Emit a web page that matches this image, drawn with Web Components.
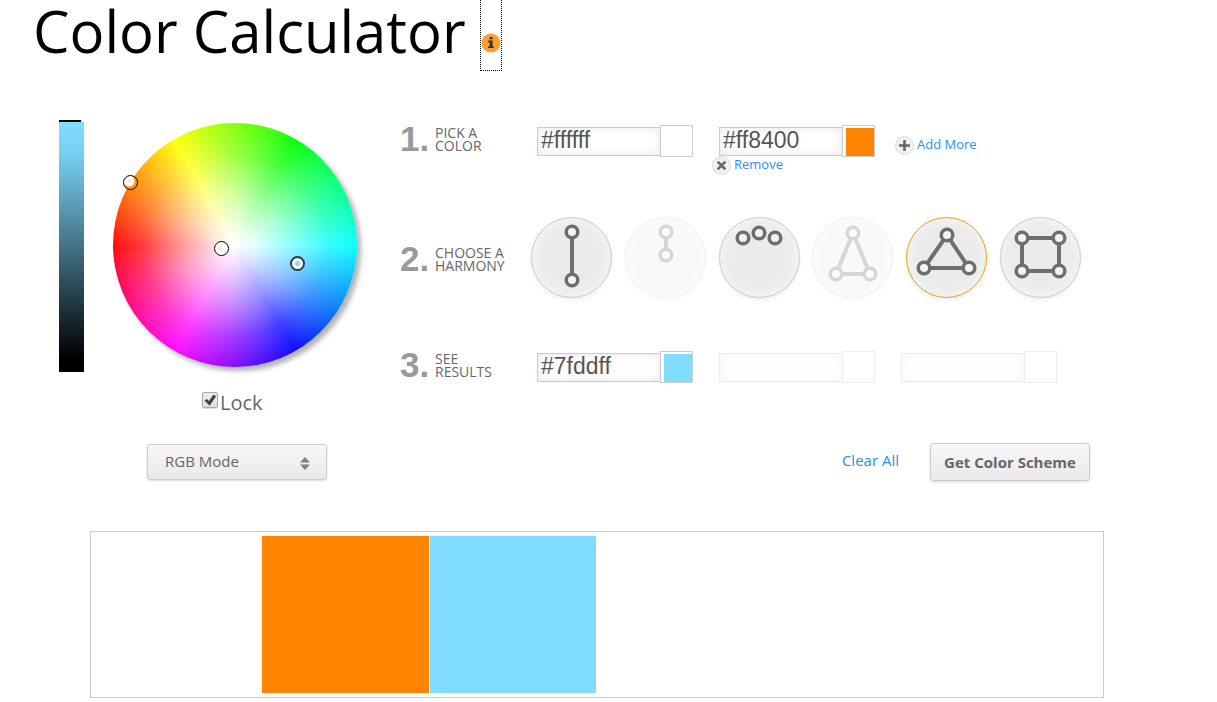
<!DOCTYPE html>
<html lang="en">
<head>
<meta charset="utf-8">
<title>Color Calculator</title>
<style>
  body { margin: 0; background: #fff; color: #666; font-family: "Open Sans", "Noto Sans", sans-serif; }
</style>
</head>
<body>
<color-calculator></color-calculator>

<script>
const define = (name, html, setup) => {
  const template = document.createElement('template');
  template.innerHTML = html;
  customElements.define(name, class extends HTMLElement {
    constructor() {
      super();
      this.attachShadow({ mode: 'open' }).append(template.content.cloneNode(true));
    }
    connectedCallback() { if (setup) setup(this, this.shadowRoot); }
  });
};

define('page-title', `
  <style>
    :host { display: block; padding-left: 33px; }
    h1 { margin: 0; font-size: 58px; line-height: 62px; font-weight: 400; color: #000; }
    a { outline: 1px dotted #000; }
    svg { width: 20px; height: 20px; }
  </style>
  <h1><slot></slot> <a href="#" aria-label="About the color calculator"><svg viewBox="0 0 20 20">
    <circle cx="10" cy="10" r="9.5" fill="#f9a030"/>
    <path d="M8.6 4h3v2.3h-3zM7.2 7.6h4.4v5.8h1.3V15H7v-1.6h1.6V9.2H7.2z" fill="#333"/>
  </svg></a></h1>
`);

define('brightness-slider', `
  <style>
    :host { display: block; }
    input {
      appearance: none; display: block; box-sizing: border-box; margin: 0;
      width: 25px; height: 252px; writing-mode: vertical-lr; direction: rtl;
      background: linear-gradient(#7fddff, #78d0f1 12%, #66aecd 26%, #000 95%) 0 2px / 100% 250px no-repeat;
    }
    input::-webkit-slider-thumb { appearance: none; width: 22px; height: 2px; margin-left: -3px; background: #000; }
  </style>
  <input type="range" min="0" max="100" value="100" aria-label="Brightness">
`);

define('wheel-handle', `
  <style>
    :host { position: absolute; box-sizing: border-box; width: 15px; height: 15px; border: 1px solid #000; border-radius: 50%; }
    :host([active]) { border: 2px solid #24404c; background: radial-gradient(circle, #7fddff 2px, #fff 3px); }
    :host([center]) { background: radial-gradient(circle at 5px 6px, #ffe6ea 2px, #fff 3px); }
    :host([edge]) { background: radial-gradient(circle at 5px 5px, #ffe3c4 1px, #fff 2px, #fff 5px, #ff9a10 6px); }
  </style>
`);

define('color-wheel', `
  <style>
    :host {
      display: block; position: relative; width: 244px; height: 244px; border-radius: 50%;
      background:
        radial-gradient(circle closest-side, #fff 0%, rgba(255,255,255,.88) 16%, rgba(255,255,255,.58) 45%, rgba(255,255,255,.24) 75%, rgba(255,255,255,.05) 100%),
        conic-gradient(from 270deg, #f00, #ff0, #0f0, #0ff, #00f, #f0f, #f00);
      box-shadow: 4px 4px 5px rgba(0,0,0,.3);
    }
  </style>
  <wheel-handle edge style="left:10px;top:52px"></wheel-handle>
  <wheel-handle center style="left:101px;top:118px"></wheel-handle>
  <wheel-handle active style="left:177px;top:133px"></wheel-handle>
`);

define('lock-box', `
  <style>
    :host { display: block; }
    label { display: flex; gap: 2px; font-size: 20px; line-height: 26px; }
    input {
      appearance: none; box-sizing: border-box; width: 16px; height: 16px; margin: 2px 0 0;
      border: 1px solid #aaa; border-radius: 2px; background: linear-gradient(#eee, #ddd);
      box-shadow: 0 1px 1px #ddd;
    }
    input:checked::before {
      content: ""; display: block; width: 14px; height: 14px; background: #444;
      clip-path: polygon(11% 54%, 27% 43%, 42% 57%, 75% 10%, 94% 23%, 47% 91%);
    }
  </style>
  <label><input type="checkbox" checked><slot></slot></label>
`);

define('mode-select', `
  <style>
    :host { display: grid; width: 180px; }
    select, svg { grid-area: 1 / 1; }
    select {
      appearance: none; box-sizing: border-box; height: 36px; padding: 0 17px 2px; border: 1px solid #ccc; border-radius: 3px;
      background: linear-gradient(#f8f8f8, #e9e9e9); box-shadow: 0 1px 2px #ddd;
      color: #666; font: 15px "Open Sans", "Noto Sans", sans-serif;
    }
    svg { justify-self: end; align-self: center; width: 10px; height: 13px; margin: 2px 17px 0 0; pointer-events: none; }
  </style>
  <select aria-label="Color mode"><option>RGB Mode</option><option>RYB Mode</option></select>
  <svg viewBox="0 0 10 13"><path d="M5 0l5 5.5H0zM0 7.5h10L5 13z" fill="#808080"/></svg>
`);

define('color-field', `
  <style>
    :host { display: flex; align-items: center; width: 156px; }
    :host([disabled]) { opacity: .35; }
    input {
      box-sizing: border-box; width: 124px; height: 29px; padding: 0 3px 2px; border: 1px solid #ccc; border-radius: 0;
      background: #fff; box-shadow: inset 0 0 8px #e4e4e4; color: #555; font: 23px/25px "Liberation Sans", Arial, sans-serif;
    }
    button {
      box-sizing: border-box; flex: none; width: 33px; height: 32px; margin: 0 0 0 -1px; padding: 2px 0 0 3px;
      border: 1px solid #ccc; background: #fff;
    }
    span { display: block; height: 28px; background: var(--swatch, #fff); }
  </style>
  <input type="text"><button type="button"><span></span></button>
`, (host, root) => {
  const input = root.querySelector('input');
  const button = root.querySelector('button');
  input.value = host.getAttribute('value') || '';
  input.disabled = button.disabled = host.hasAttribute('disabled');
  input.setAttribute('aria-label', host.getAttribute('label'));
  button.setAttribute('aria-label', host.getAttribute('label') + ' swatch');
  if (input.value) host.style.setProperty('--swatch', input.value);
});

define('icon-link', `
  <style>
    :host { display: block; }
    a { display: flex; align-items: flex-start; gap: 3px; color: #2a8fee; font-size: 13px; line-height: 16px; text-decoration: none; }
    svg { flex: none; width: 19px; height: 19px; }
    :host([icon="remove"]) g { transform: rotate(45deg); transform-origin: center; }
  </style>
  <a href="#"><svg viewBox="0 0 19 19">
    <circle cx="9.5" cy="9.5" r="9" fill="#f1f1f1" stroke="#ddd"/>
    <g><path d="M9.5 4v11M4 9.5h11" stroke="#666" stroke-width="2.6"/></g>
  </svg><slot></slot></a>
`);

define('harmony-button', `
  <style>
    :host { display: block; }
    :host([disabled]) { opacity: .28; }
    button {
      display: block; box-sizing: border-box; width: 81px; height: 81px; padding: 0; border: 1px solid #ccc; border-radius: 50%;
      background: #ebebeb; box-shadow: inset 0 0 12px #fafafa, 0 2px 4px #eee;
    }
    :host([selected]) button { border-color: #f9a000; }
    svg { display: block; width: 79px; height: 79px; fill: none; stroke: #6d6e71; }
    path { stroke-width: 4; }
    circle { fill: #f3f3f3; stroke-width: 3.5; }
  </style>
  <button type="button"><svg viewBox="1 1 79 79"><path></path></svg></button>
`, (host, root) => {
  const points = host.getAttribute('points').split(' ').map(p => p.split(','));
  const svg = root.querySelector('svg');
  if (!host.hasAttribute('loose')) svg.firstChild.setAttribute('d', 'M' + points.map(p => p.join(' ')).join('L') + 'Z');
  for (const [x, y] of points) {
    const dot = document.createElementNS('http://www.w3.org/2000/svg', 'circle');
    dot.setAttribute('cx', x);
    dot.setAttribute('cy', y);
    dot.setAttribute('r', 5.8);
    svg.append(dot);
  }
  const button = root.querySelector('button');
  button.disabled = host.hasAttribute('disabled');
  button.setAttribute('aria-label', host.getAttribute('label'));
});

define('step-row', `
  <style>
    :host { display: grid; grid-template-columns: 131px 1fr; align-items: start; }
    h2 { display: flex; gap: 5px; margin: 0; padding-top: 1px; font-weight: 400; }
    :host([middle]) { align-items: center; }
    :host([middle]) h2 { padding-top: 2px; }
    b { width: 30px; color: #999; font: bold 35px/26px "Liberation Sans", Arial, sans-serif; }
    span { font-size: 14px; line-height: 13px; }
  </style>
  <h2><b></b><span><slot name="label"></slot></span></h2>
  <slot></slot>
`, (host, root) => { root.querySelector('b').textContent = host.getAttribute('number') + '.'; });

define('scheme-actions', `
  <style>
    :host { display: flex; justify-content: flex-end; align-items: center; gap: 31px; padding-right: 14px; }
    a { color: #2a8fee; font-size: 15px; line-height: 20px; padding-bottom: 4px; text-decoration: none; }
    button {
      box-sizing: border-box; width: 160px; height: 38px; padding: 0; border: 1px solid #ccc; border-radius: 3px;
      background: linear-gradient(#f8f8f8, #e9e9e9); box-shadow: 0 1px 3px #ddd;
      color: #666; font: bold 15px "Open Sans", "Noto Sans", sans-serif;
    }
  </style>
  <a href="#">Clear All</a><button type="button">Get Color Scheme</button>
`);

define('palette-strip', `
  <style>
    :host { display: grid; grid-template-columns: repeat(6, 1fr); gap: 1px; padding: 4px 5px 4px 4px; border: 1px solid #ccc; }
    div { height: 157px; }
  </style>
`, (host, root) => {
  for (const color of host.getAttribute('colors').split(' ')) {
    const cell = document.createElement('div');
    cell.style.background = color;
    root.append(cell);
  }
});

define('color-calculator', `
  <style>
    :host { display: block; }
    main { display: grid; grid-template-columns: 298px 1fr; gap: 43px; margin: 58px 113px 0 59px; }
    .picker { display: grid; grid-template-columns: 25px 1fr; column-gap: 29px; align-content: start; }
    color-wheel { margin-top: 3px; }
    lock-box, mode-select { grid-column: 2; }
    lock-box { margin: 18px 0 0 89px; }
    mode-select { margin: 28px 0 0 34px; }
    .steps { display: flex; flex-direction: column; padding-top: 5px; }
    .fields { display: flex; align-items: flex-start; gap: 26px; padding-left: 6px; }
    .fields icon-link[icon="remove"] { margin: -1px 0 0 -7px; }
    .fields icon-link[icon="add"] { margin: 11px 0 0 -6px; }
    .harmonies { display: flex; justify-content: space-between; max-width: 550px; }
    step-row:nth-of-type(2) { margin-top: 42px; }
    step-row:nth-of-type(3) { margin-top: 53px; }
    scheme-actions { margin-top: 60px; }
    palette-strip { margin: 50px 113px 4px 90px; }
  </style>
  <page-title>Color Calculator</page-title>
  <main>
    <section class="picker">
      <brightness-slider></brightness-slider>
      <color-wheel></color-wheel>
      <lock-box>Lock</lock-box>
      <mode-select></mode-select>
    </section>
    <section class="steps">
      <step-row number="1">
        <span slot="label">PICK A<br>COLOR</span>
        <div class="fields">
          <color-field label="Color 1" value="#ffffff"></color-field>
          <div>
            <color-field label="Color 2" value="#ff8400"></color-field>
            <icon-link icon="remove">Remove</icon-link>
          </div>
          <icon-link icon="add">Add More</icon-link>
        </div>
      </step-row>
      <step-row number="2" middle>
        <span slot="label">CHOOSE A<br>HARMONY</span>
        <div class="harmonies">
          <harmony-button label="Complementary" points="41,15 41,63"></harmony-button>
          <harmony-button label="Monochromatic" points="41,15 41,38" disabled></harmony-button>
          <harmony-button label="Analogous" points="24,21 40,16 56,21" loose></harmony-button>
          <harmony-button label="Split complementary" points="41,16 58,57 24,57" disabled></harmony-button>
          <harmony-button label="Triadic" points="41,18 63,51 18,51" selected></harmony-button>
          <harmony-button label="Tetradic" points="22,21 59,21 59,54 22,54"></harmony-button>
        </div>
      </step-row>
      <step-row number="3">
        <span slot="label">SEE<br>RESULTS</span>
        <div class="fields">
          <color-field label="Result 1" value="#7fddff"></color-field>
          <color-field label="Result 2" disabled></color-field>
          <color-field label="Result 3" disabled></color-field>
        </div>
      </step-row>
      <scheme-actions></scheme-actions>
    </section>
  </main>
  <palette-strip colors="#ffffff #ff8400 #7fddff"></palette-strip>
`);
</script>
</body>
</html>
